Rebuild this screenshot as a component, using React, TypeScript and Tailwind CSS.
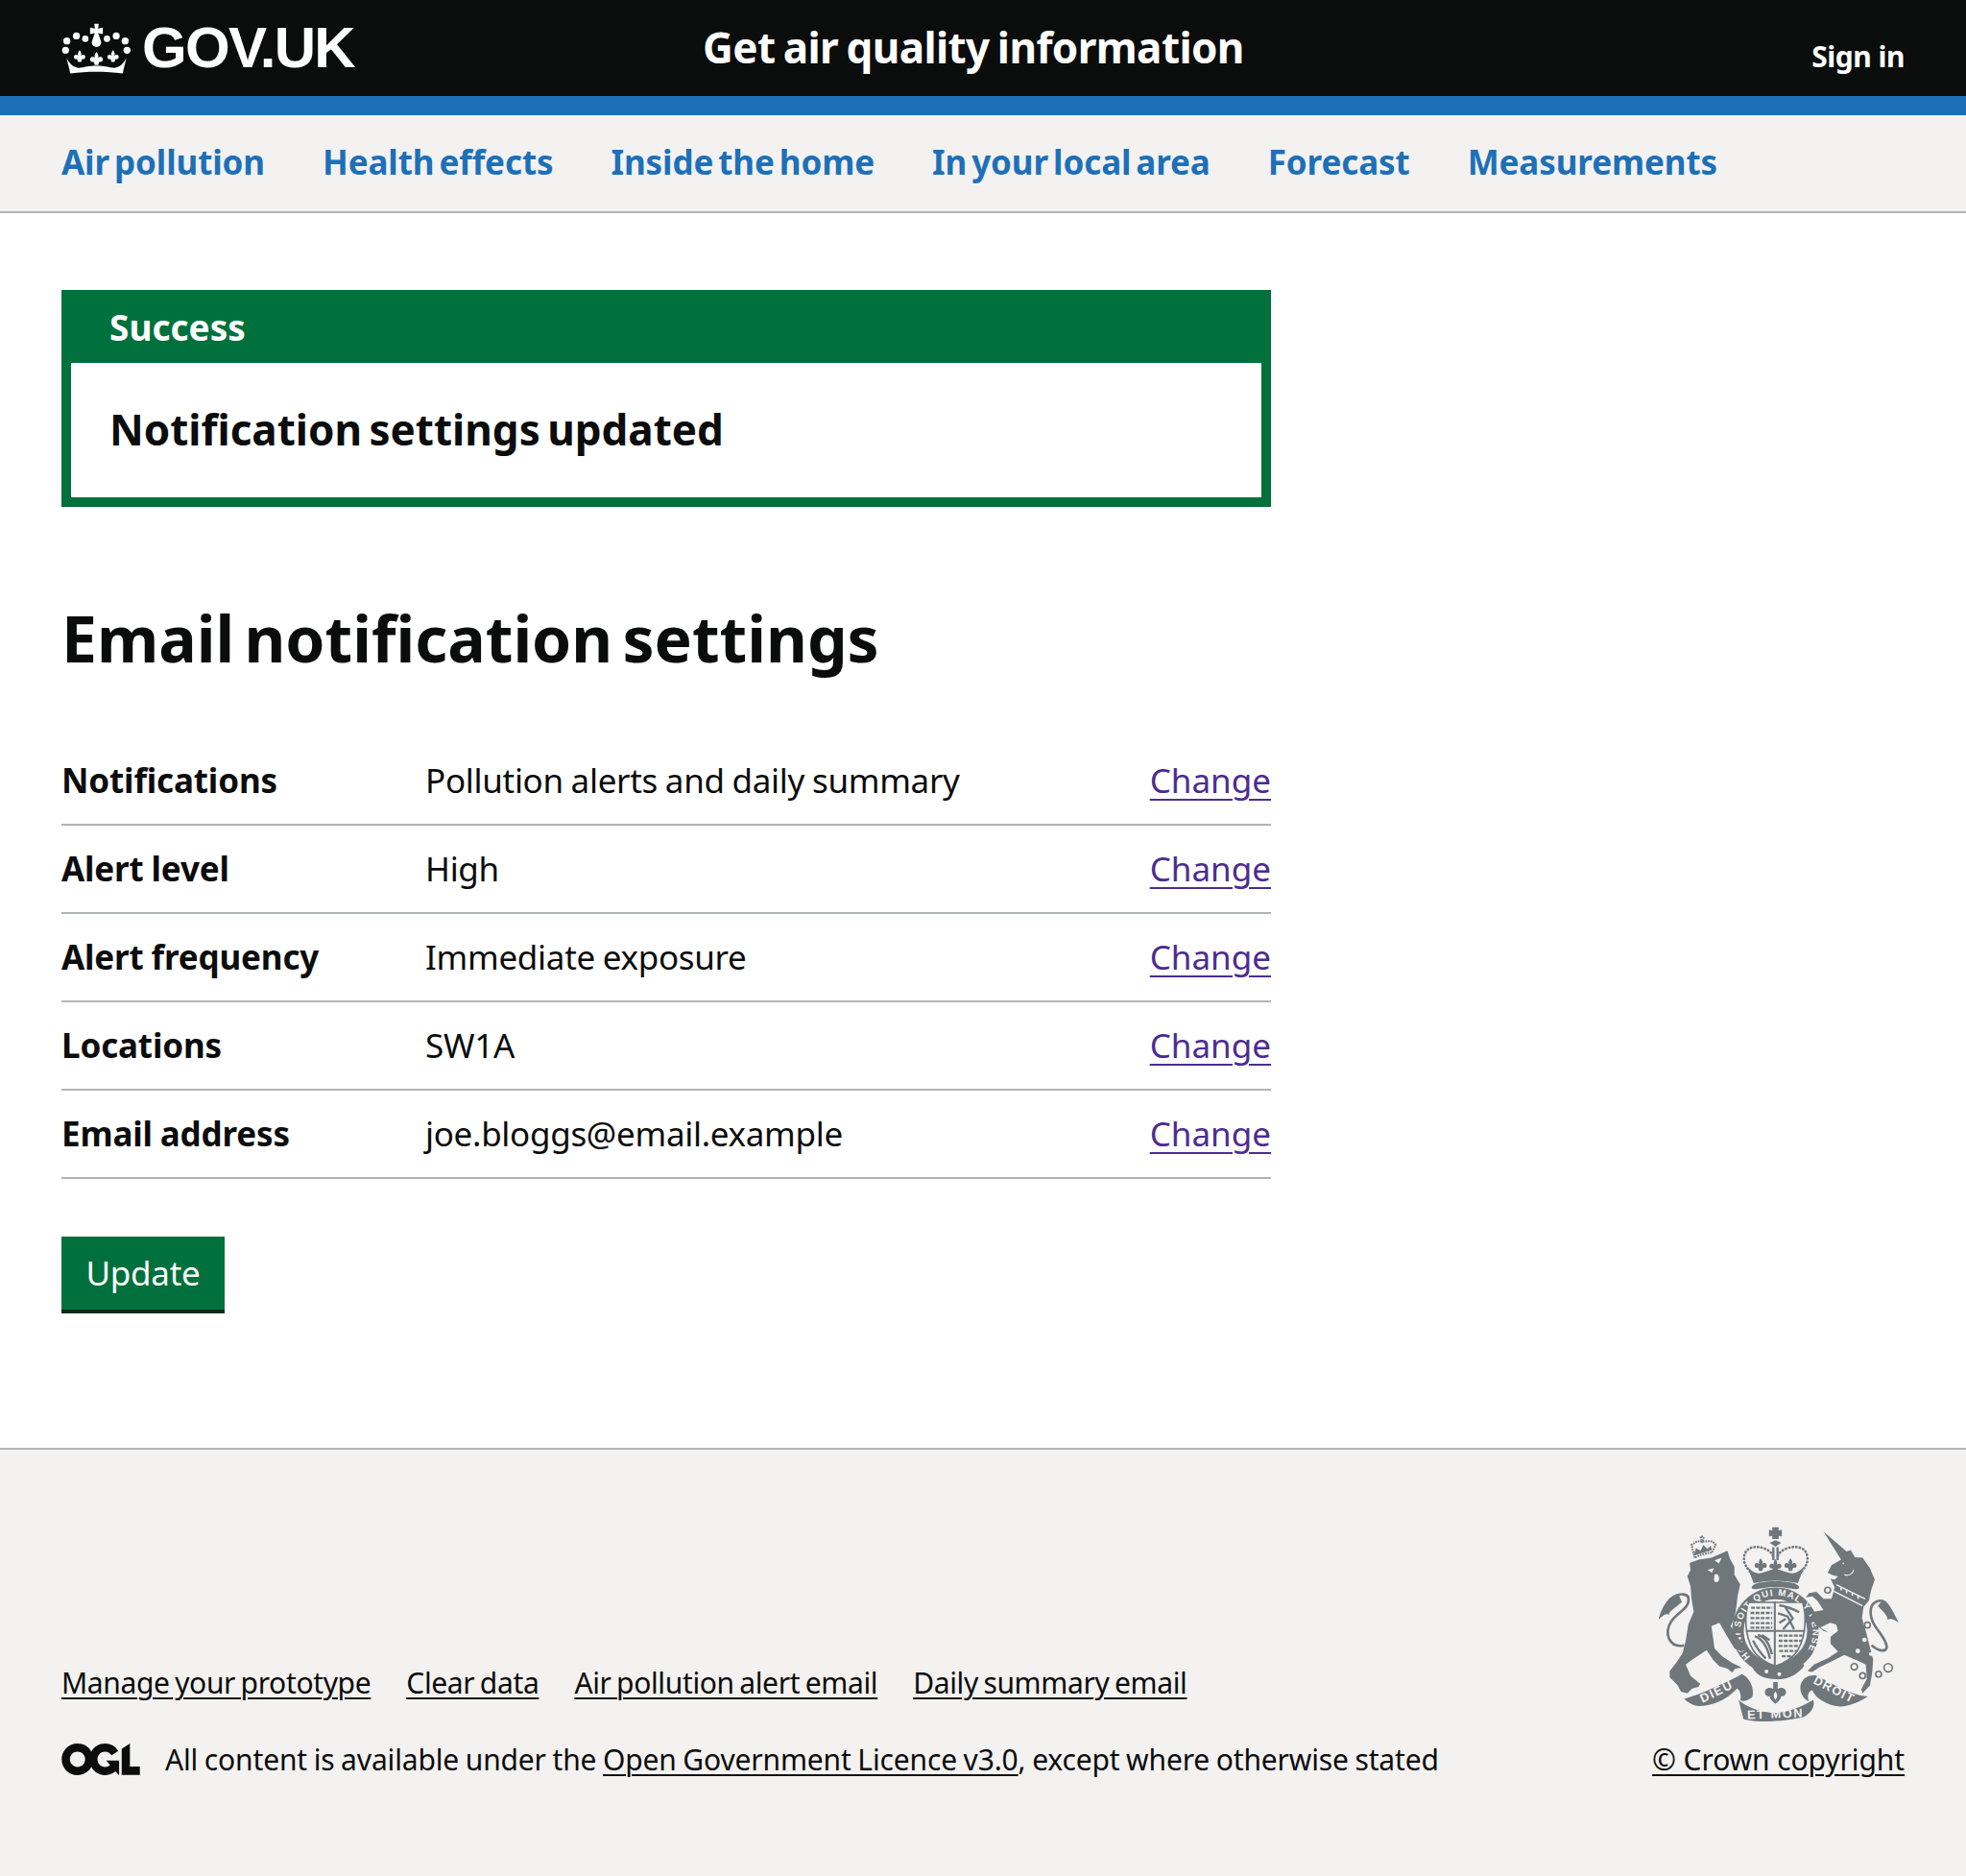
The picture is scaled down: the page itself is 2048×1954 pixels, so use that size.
const font = "font-['Noto_Sans',sans-serif]";
const body = "text-[35px] tracking-[-0.3px] [word-spacing:-1px]";
const footLink = "underline underline-offset-4 decoration-2";

const navLinks = [
  "Air pollution",
  "Health effects",
  "Inside the home",
  "In your local area",
  "Forecast",
  "Measurements",
];

const settings = [
  { key: "Notifications", value: "Pollution alerts and daily summary" },
  { key: "Alert level", value: "High" },
  { key: "Alert frequency", value: "Immediate exposure" },
  { key: "Locations", value: "SW1A" },
  { key: "Email address", value: "joe.bloggs@email.example" },
];

const footerLinks = [
  "Manage your prototype",
  "Clear data",
  "Air pollution alert email",
  "Daily summary email",
];

const fleur =
  "M0,-30C6,-22 9,-15 5,-8C10,-14 20,-14 22,-6C24,2 16,8 10,4L6,16L-6,16L-10,4C-16,8 -24,2 -22,-6C-20,-14 -10,-14 -5,-8C-9,-15 -6,-22 0,-30Z";

function Crown() {
  return (
    <svg viewBox="190 60 220 165" className="w-[73px] h-[55px] shrink-0" fill="currentColor">
      <path d="M293,65h14l-2,15 15,-3v20l-15,-3 2,5 8,24a15,15 0 1 1 -30,0l8,-24 2,-5 -15,3v-20l15,3z" />
      <circle cx="237" cy="103" r="11" />
      <circle cx="362" cy="103" r="11" />
      <circle cx="265" cy="112" r="10" />
      <circle cx="333" cy="112" r="10" />
      <circle cx="207" cy="119" r="11" />
      <circle cx="390" cy="119" r="11" />
      <circle cx="203" cy="148" r="11" />
      <circle cx="396" cy="148" r="11" />
      <path d="M218,221C272,214 328,214 382,221L394,172C384,192 370,205 350,203C335,201 325,197 300,197C275,197 265,201 250,203C230,205 216,192 206,172Z" />
      <path transform="translate(300,180) scale(.9)" d={fleur} />
      <path transform="translate(247,172) scale(.8)" d={fleur} />
      <path transform="translate(352,172) scale(.8)" d={fleur} />
    </svg>
  );
}

function OglLogo() {
  return (
    <svg viewBox="0 0 483.2 195.7" className="w-[82px] h-[33px] shrink-0" fill="currentColor">
      <path d="M421.5 142.8V.1l-50.7 32.3v161.1h112.4v-50.7zm-122.3-9.6A47.12 47.12 0 0 1 221 97.8c0-26 21.1-47.1 47.1-47.1 16.7 0 31.4 8.7 39.7 21.8l42.7-27.2A97.63 97.63 0 0 0 268.1 0c-36.5 0-68.3 20.1-85.1 49.7A98 98 0 0 0 97.8 0C43.9 0 0 43.9 0 97.8s43.9 97.8 97.8 97.8c36.5 0 68.3-20.1 85.1-49.7a97.76 97.76 0 0 0 149.6 25.4l19.4 22.2h3v-87.8h-80l24.3 27.5zM97.8 145c-26 0-47.1-21.1-47.1-47.1s21.1-47.1 47.1-47.1 47.2 21 47.2 47S123.8 145 97.8 145" />
    </svg>
  );
}

// hand-traced royal arms, coords are the 3x zoom of the reference
function Arms() {
  const grey = "#6f777b";
  const bg = "#f3f2f1";
  return (
    <svg viewBox="80 60 755 610" className="w-[252px] h-[204px] mr-[6px]" fill={grey}>
      {/* royal crown */}
      <path d="M440,62h20v10l10,-3v22l-10,-3v10h-20v-10l-10,3v-22l10,3z" />
      <path d="M432,110l18,-8 18,8 -18,12z" />
      <path d="M440,124h7v40h-7zM453,124h7v40h-7z" />
      <g fill="none" stroke={grey} strokeWidth="8" strokeDasharray="1 10" strokeLinecap="round">
        <path d="M442,150C430,120 352,105 352,160C352,178 362,190 374,204" />
        <path d="M458,150C470,120 550,105 550,160C550,178 540,190 528,204" />
      </g>
      <path d="M382,236L362,184C375,200 390,210 410,203C428,198 440,192 450,192C460,192 472,198 490,203C510,210 525,200 540,184L520,236C480,226 420,226 382,236Z" />
      <path transform="translate(450,186) scale(.85)" d={fleur} />
      <path transform="translate(404,184) scale(.85)" d={fleur} />
      <path transform="translate(497,184) scale(.85)" d={fleur} />
      <path d="M376,250C376,236 410,230 450,230C490,230 524,236 524,250C524,262 490,248 450,248C410,248 376,262 376,250Z" />

      {/* garter and shield */}
      <circle cx="450" cy="385" r="117" fill="none" stroke={grey} strokeWidth="36" />
      <path d="M366,296H535C548,340 545,400 520,445C505,468 480,485 450,495C420,485 395,468 380,445C355,400 352,340 366,296Z" fill={bg} stroke={grey} strokeWidth="5" />
      <path d="M448,294V492M358,385H542" fill="none" stroke={grey} strokeWidth="6" />
      <g fill="none" stroke={grey} strokeWidth="7">
        <path d="M374,313h66M372,329h68M372,345h68M372,361h68M372,375h68" strokeDasharray="12 4" />
        <path d="M462,305c24,4 44,12 62,22M458,330l30,10 20,40M480,310l24,36 -30,34M462,360l20,-12" />
        <path d="M460,400h74M460,416h72M460,432h66M462,448h54M470,464h34" strokeDasharray="12 4" />
        <path d="M385,402c20,4 40,30 48,70M395,398c20,4 36,28 44,60M380,415c10,20 24,40 40,56M408,398l24,16" />
      </g>
      <path d="M378,500C390,478 408,500 450,505C490,510 512,490 532,480L540,494C525,516 490,540 450,536C420,534 395,530 378,500Z" />
      <circle cx="422" cy="512" r="6" fill={bg} />
      <circle cx="462" cy="520" r="6" fill={bg} />
      <path id="garter" d="M372,466A113,113 0 1 1 535,466" fill="none" />
      <text fill={bg} fontFamily="'Liberation Sans', sans-serif" fontWeight="700" fontSize="29">
        <textPath href="#garter" textLength="500">HONI SOIT QUI MAL Y PENSE</textPath>
      </text>

      {/* lion, tail and crown */}
      <g transform="translate(60,45)">
        <path d="M122,128L150,118L190,112L240,90L248,115L262,140L262,165L280,195L272,230L268,265L262,300L250,325L262,345L280,370L300,395L285,405L262,395L250,375L235,350L215,315L190,325L195,360L200,395L225,420L255,440L285,455L265,458L255,470L240,458L215,450L195,430L175,400L130,430L110,445L125,480L155,505L150,515L130,520L115,535L95,530L85,510L60,485L60,465L80,440L100,410L110,370L118,320L135,280L128,240L125,200L115,170L125,150Z" />
        <path d="M178,150l20,-6 -6,14zM222,112l-22,8 14,10zM200,165c8,-4 16,2 14,16 -2,10 -14,10 -16,0z" fill={bg} />
        <path d="M105,385C60,395 40,350 65,310C85,280 125,270 118,235C112,222 90,225 80,230" fill="none" stroke={grey} strokeWidth="8" />
        <path d="M88,226C60,225 35,265 25,305C40,290 50,285 58,290C55,280 75,270 98,250Z" />
        <path d="M138,112L128,72C145,60 150,58 160,62L156,46H166L163,62C175,60 195,55 203,72L192,96C175,96 155,102 138,112Z" fill="none" stroke={grey} strokeWidth="6" strokeDasharray="5 3" />
        <path d="M134,106L192,88L188,74L178,84L165,72L156,90L142,82Z" />
      </g>

      {/* unicorn, tail and chain */}
      <g transform="translate(450,45)">
        <path d="M150,30L222,92L235,88L248,110L272,112L295,145L310,180L298,215L292,245L275,265L270,300L282,340L292,380L305,430L302,470L295,510L272,535L268,522L285,490L282,445L255,432L215,415L175,435L135,455L115,468L100,465L120,445L165,425L195,405L172,380L172,358L195,340L190,320L170,315L140,330L165,345L150,340L125,320L110,295L120,280L150,275L130,245L115,232L95,235L105,222L128,218L150,240L175,240L185,205L172,178L185,180L195,170L175,165L163,158L175,135L205,118Z" />
        <path d="M190,196L280,240M182,216L272,262" fill="none" stroke={bg} strokeWidth="4" />
        <path d="M205,206v8M222,212v10M240,222v8M258,230v10" fill="none" stroke={bg} strokeWidth="5" />
        <path d="M245,150c-6,14 -18,20 -30,14" fill="none" stroke={bg} strokeWidth="3" />
        <circle cx="212" cy="130" r="3" fill={bg} />
        <circle cx="278" cy="368" r="7" fill={bg} />
        <circle cx="257" cy="403" r="7" fill={bg} />
        <circle cx="298" cy="412" r="6" fill={bg} />
        <circle cx="287" cy="322" r="9" fill={bg} stroke={grey} strokeWidth="5" />
        <g fill="none" stroke={grey} strokeWidth="5">
          <circle cx="246" cy="452" r="10" />
          <circle cx="272" cy="480" r="9" />
          <circle cx="322" cy="475" r="9" />
          <circle cx="352" cy="455" r="13" />
          <circle cx="163" cy="213" r="9" />
          <circle cx="152" cy="298" r="9" />
        </g>
        <path d="M300,385C330,410 355,405 345,380C335,345 290,320 298,270C302,250 325,240 340,250" fill="none" stroke={grey} strokeWidth="8" />
        <path d="M335,243C355,250 370,285 385,315C370,305 360,300 350,305C350,290 335,280 320,262Z" />
      </g>

      {/* motto ribbons */}
      <path d="M165,597C210,585 290,550 345,520C370,530 385,565 378,590C370,600 350,610 340,600C345,590 340,570 330,565C300,600 250,620 210,620C195,618 175,608 165,597Z" />
      <path d="M738,590C710,610 670,625 640,620C610,615 575,595 565,570C552,572 548,590 555,605C540,600 525,580 528,555C535,530 555,522 575,524C620,545 680,585 738,590Z" />
      <path d="M335,600C360,625 420,645 460,640C510,635 550,610 568,600C575,620 560,645 535,655C490,665 400,675 350,660C345,640 340,620 335,600Z" />
      <path d="M450,545h-7v22c-10,-8 -26,-4 -26,10 0,8 8,14 16,12 -2,8 8,16 17,24 9,-8 19,-16 17,-24 8,2 16,-4 16,-12 0,-14 -16,-18 -26,-10v-22z" />
      <path d="M450,574c-6,8 -8,16 0,26c8,-10 6,-18 0,-26z" fill={bg} />
      <g fill={bg} fontFamily="'Liberation Sans', sans-serif" fontWeight="700" fontSize="38">
        <text x="362" y="657" transform="rotate(-2 450 650)" textLength="172">ET MON</text>
        <text x="222" y="610" transform="rotate(-26 222 610)" textLength="106">DIEU</text>
        <text x="566" y="548" transform="rotate(27 566 548)" textLength="135">DROIT</text>
      </g>
    </svg>
  );
}

export default function App() {
  return (
    <div className={`${font} text-[#0b0c0c] min-h-[1954px] flex flex-col`}>
      <header className="bg-[#0b0c0c] text-white h-[100px] px-16 flex items-center justify-between">
        <div className="flex items-center gap-[11px] w-[668px]">
          <Crown />
          <span className="font-['Liberation_Sans',sans-serif] font-bold text-[60px] tracking-[-1.7px] leading-none">GOV.UK</span>
        </div>
        <span className="font-bold text-[44px] leading-none tracking-[-0.6px] [word-spacing:-2.5px] flex-1 pb-0.5">Get air quality information</span>
        <span className="font-bold text-[30px] leading-none pt-[18px] tracking-[-0.5px]">Sign in</span>
      </header>
      <div className="h-5 bg-[#1d70b8]" />
      <nav className="h-[102px] bg-[#f3f2f1] border-b-2 border-[#b1b4b6] px-16 flex items-center gap-[60px]">
        {navLinks.map((l) => (
          <a key={l} className="font-bold text-[35px] tracking-[-0.1px] [word-spacing:-4px] text-[#1d70b8] pb-0.5">{l}</a>
        ))}
      </nav>
      <main className="px-16 pt-20 flex-1">
        <div className="w-[1260px]">
          <div className="border-[10px] border-[#00703c] h-[226px]">
            <div className="bg-[#00703c] text-white font-bold text-[37px] h-[66px] pl-10 pb-2 flex items-center">Success</div>
            <div className="font-bold text-[44px] [word-spacing:-4px] pl-10 pt-[36px]">Notification settings updated</div>
          </div>
          <h1 className="font-bold text-[66px] leading-none [word-spacing:-7px] mt-[103px] mb-[71px]">Email notification settings</h1>
          <dl>
            {settings.map((s) => (
              <div key={s.key} className={`h-[92px] border-b-2 border-[#b1b4b6] flex items-center ${body}`}>
                <dt className="font-bold w-[379px] tracking-[-0.15px]">{s.key}</dt>
                <dd className="flex-1">{s.value}</dd>
                <a className="text-[#4c2c92] underline underline-offset-[6px] decoration-2 tracking-normal">Change</a>
              </div>
            ))}
          </dl>
          <button className={`mt-[60px] bg-[#00703c] text-white ${body} w-[170px] h-20 border-b-4 border-[#002d18]`}>Update</button>
        </div>
      </main>
      <footer className="bg-[#f3f2f1] border-t-2 border-[#b1b4b6] h-[446px] px-16 pt-20 flex items-end justify-between pb-[99px]">
        <div className="text-[30px]">
          <div className="flex gap-[37px] mb-[35px] tracking-[-0.35px] [word-spacing:-2px]">
            {footerLinks.map((l) => (
              <a key={l} className={footLink}>{l}</a>
            ))}
          </div>
          <div className="flex items-center gap-[26px] tracking-[-0.15px] [word-spacing:-1px]">
            <OglLogo />
            <span>All content is available under the <a className={footLink}>Open Government Licence v3.0</a>, except where otherwise stated</span>
          </div>
        </div>
        <div className="flex flex-col items-end text-[30px]">
          <Arms />
          <a className={`${footLink} mt-4 tracking-[-0.1px]`}>© Crown copyright</a>
        </div>
      </footer>
    </div>
  );
}
